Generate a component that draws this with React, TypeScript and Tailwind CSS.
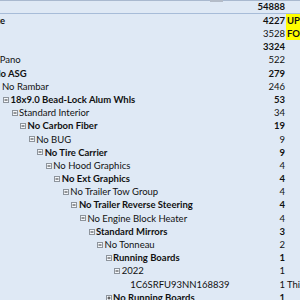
type Row = {
  label?: string;
  level?: number; // tree depth; negative depths run off the left edge
  x?: number; // fixed text position for rows whose parent columns are scrolled away
  box?: "minus" | "plus" | null;
  count: string;
  bold?: boolean;
  note?: string;
  flag?: boolean;
};

const STEP = 8.55;
const ORIGIN = 3;

const rows: Row[] = [
  { label: "Rubicon 4xe", x: -47, count: "4227", bold: true, note: "UPDATE PENDING", flag: true },
  { count: "3528", note: "FOLLOW UP", flag: true },
  { count: "3324", bold: true },
  { label: "No Pano", level: -3, box: "minus", count: "522" },
  { label: "No ASG", level: -2, box: "minus", count: "279", bold: true },
  { label: "No Rambar", level: -1, box: "minus", count: "246" },
  { label: "18x9.0 Bead-Lock Alum Whls", level: 0, box: "minus", count: "53", bold: true },
  { label: "Standard Interior", level: 1, box: "minus", count: "34" },
  { label: "No Carbon Fiber", level: 2, box: "minus", count: "19", bold: true },
  { label: "No BUG", level: 3, box: "minus", count: "9" },
  { label: "No Tire Carrier", level: 4, box: "minus", count: "9", bold: true },
  { label: "No Hood Graphics", level: 5, box: "minus", count: "4" },
  { label: "No Ext Graphics", level: 6, box: "minus", count: "4", bold: true },
  { label: "No Trailer Tow Group", level: 7, box: "minus", count: "4" },
  { label: "No Trailer Reverse Steering", level: 8, box: "minus", count: "4", bold: true },
  { label: "No Engine Block Heater", level: 9, box: "minus", count: "4" },
  { label: "Standard Mirrors", level: 10, box: "minus", count: "3", bold: true },
  { label: "No Tonneau", level: 11, box: "minus", count: "2" },
  { label: "Running Boards", level: 12, box: "minus", count: "1", bold: true },
  { label: "2022", level: 13, box: "minus", count: "1" },
  { label: "1C6SRFU93NN168839", level: 14, box: null, count: "1", note: "This unit is sold" },
  { label: "No Running Boards", level: 12, box: "plus", count: "1", bold: true },
];

function Toggle({ kind }: { kind: "minus" | "plus" }) {
  return (
    <svg width="6" height="6" viewBox="0 0 6 6" className="shrink-0">
      <rect x="0.5" y="0.5" width="5" height="5" fill="#f4f7fb" stroke="#8d949c" />
      <line x1="1.5" y1="3" x2="4.5" y2="3" stroke="#333" strokeWidth="1" />
      {kind === "plus" && <line x1="3" y1="1.5" x2="3" y2="4.5" stroke="#333" strokeWidth="1" />}
    </svg>
  );
}

function TreeCell({ row }: { row: Row }) {
  if (!row.label) return <div className="w-[250px] shrink-0" />;
  if (row.x !== undefined) {
    return (
      <div className="w-[250px] shrink-0 overflow-hidden relative h-full">
        <div className="absolute top-0 h-full flex items-center whitespace-nowrap" style={{ left: row.x }}>
          {row.label}
        </div>
      </div>
    );
  }
  const left = ORIGIN + (row.level ?? 0) * STEP;
  return (
    <div className="w-[250px] shrink-0 overflow-hidden relative h-full">
      <div className="absolute top-0 h-full flex items-center gap-[1px] whitespace-nowrap" style={{ left }}>
        {row.box ? <Toggle kind={row.box} /> : <span className="w-[6px] shrink-0" />}
        <span className="pl-[0.5px]">{row.label}</span>
      </div>
    </div>
  );
}

export default function App() {
  return (
    <div
      className="w-[300px] h-[300px] overflow-hidden bg-[#dfe9f5] text-[#111] text-[9.5px] leading-none"
      style={{ fontFamily: "Lato, 'Liberation Sans', sans-serif" }}
    >
      <div className="relative h-[1px] bg-[#a9b9cf]">
        <div className="absolute left-[210px] top-0 w-[13px] h-[2px] bg-[#b4bcc8]" />
      </div>
      <div className="flex h-[13px] items-center border-b border-[#a7bcd8] font-bold">
        <div className="w-[250px] shrink-0" />
        <div className="w-[35px] shrink-0 text-right">54888</div>
      </div>
      {rows.map((row, i) => (
        <div key={i} className={`flex h-[13.2px] items-center ${row.bold ? "font-bold" : ""}`}>
          <TreeCell row={row} />
          <div className="w-[35px] shrink-0 text-right">{row.count}</div>
          {row.note && (
            <div
              className={`ml-[1px] h-full flex items-center pl-[1px] whitespace-nowrap shrink-0 ${
                row.flag ? "bg-[#ffff00] font-bold" : "font-normal"
              }`}
            >
              {row.note}
            </div>
          )}
        </div>
      ))}
    </div>
  );
}
